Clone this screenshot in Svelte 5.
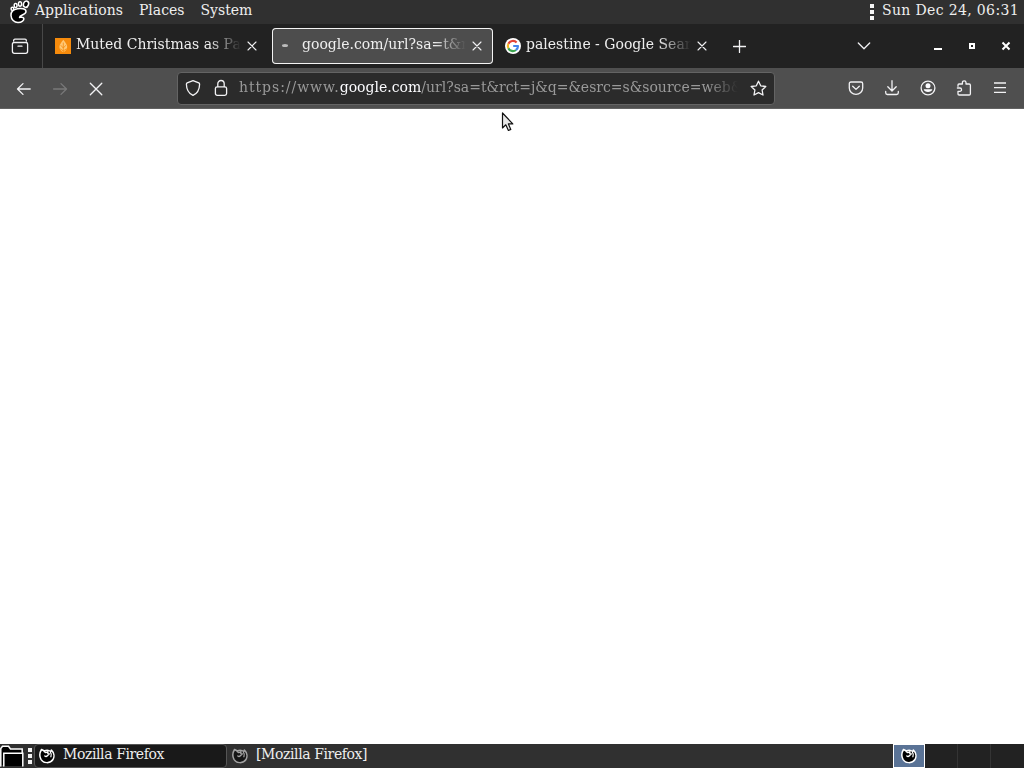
<script>
  const menus = ['Applications', 'Places', 'System'];
  const clock = 'Sun Dec 24, 06:31';

  const tabs = [
    { title: 'Muted Christmas as Pa', icon: 'orange' },
    { title: 'google.com/url?sa=t&r', icon: 'loading', active: true },
    { title: 'palestine - Google Sear', icon: 'google' }
  ];

  const windows = [
    { title: 'Mozilla Firefox', active: true },
    { title: '[Mozilla Firefox]', active: false }
  ];
</script>

{#snippet close()}
  <svg class="close" viewBox="0 0 10 10"><path d="M1 1l8 8M9 1L1 9" /></svg>
{/snippet}

{#snippet firefox(cls)}
  <svg class="fox {cls}" viewBox="0 0 16 16">
    <path class="rim" d="M2.5 1.5C.7 4.5.4 8.5 2 11.3c2.7 4.4 9.2 4.4 12 .2 1.7-3.1 1-7-1.6-9.4l-.6 1.4C9.8 2 7.4 1.8 5.4 3z" />
    <path class="face" d="M5.2 3.6l1.6 1 2.2-1-.2 2 1.6.3-2 1.9c-.8.8-1.9.8-2.6.2" />
    <path class="face" d="M11.5 4.4c1 1.4 1.1 2.9.4 4.3" />
  </svg>
{/snippet}

<div class="desktop">
  <header class="panel top">
    <svg class="foot" viewBox="0 0 22 24">
      <path d="M8.5 8.8C4.5 9.4 1.8 12 2 15.5c.2 4 3.2 7 7 7 3.8 0 6.4-2.2 5.8-4.2-.5-1.7-2.5-1.2-4.3-.9-.2-2.6 6.5-2.2 6.5-5.9 0-2.9-5-3.3-8.5-2.7z" />
      <ellipse cx="3.4" cy="8.8" rx="1.3" ry="1.6" />
      <ellipse cx="6.6" cy="5.6" rx="1.4" ry="2" />
      <ellipse cx="11" cy="4" rx="1.5" ry="2.2" />
      <ellipse cx="17" cy="4.2" rx="2.5" ry="3.2" transform="rotate(22 17 4.2)" />
    </svg>
    <nav class="menus">
      {#each menus as menu}
        <span>{menu}</span>
      {/each}
    </nav>
    <span class="handle"><i></i><i></i><i></i></span>
    <time>{clock}</time>
  </header>

  <div class="tabbar">
    <div class="view">
      <svg width="18" height="17" viewBox="0 0 18 17">
        <path d="M4 1.2h10Q15.4 1.2 15.4 3M4 1.2Q2.6 1.2 2.6 3M3 4.5h12q1.6 0 1.6 1.6v7.2q0 2-2 2H3.4q-2 0-2-2V6.1q0-1.6 1.6-1.6zM7 8.2h4" />
      </svg>
    </div>
    {#each tabs as tab}
      <div class="tab" class:active={tab.active}>
        <span class="favicon">
          {#if tab.icon === 'orange'}
            <svg width="16" height="16" viewBox="0 0 16 16">
              <rect width="16" height="16" fill="#f68b0c" />
              <path d="M8.3 1.7c2.2 3 4 5 3.9 7.3-.1 2.2-1.7 4-3.9 5.3-2.2-1.3-3.9-3.1-3.9-5.3 0-2.3 1.7-4.3 3.9-7.3z" fill="#ffc875" />
              <path d="M8.3 5v9M6 7.5L8.3 10l2.3-2.5M5.5 11l2.8 2 2.8-2" fill="none" stroke="#f68b0c" stroke-width=".8" />
            </svg>
          {:else if tab.icon === 'google'}
            <svg width="16" height="16" viewBox="0 0 16 16">
              <circle cx="8" cy="8" r="8" fill="#fff" />
              <g fill="none" stroke-width="2.2" stroke-linecap="butt">
                <path d="M3.4 5.8A5 5 0 0 1 11.6 4.5" stroke="#e44436" />
                <path d="M3.4 5.8a5 5 0 0 0 0 4.4" stroke="#f5b928" />
                <path d="M3.4 10.2a5 5 0 0 0 7.6 1.8" stroke="#3da650" />
                <path d="M11 12A5 5 0 0 0 13 8H8.2" stroke="#4384ed" />
              </g>
            </svg>
          {:else}
            <span class="throbber"></span>
          {/if}
        </span>
        <span class="title">{tab.title}</span>
        {@render close()}
      </div>
    {/each}
    <svg class="plus" viewBox="0 0 13 13"><path d="M6.5 .5v12M.5 6.5h12" /></svg>
    <svg class="chevron" viewBox="0 0 14 8"><path d="M1.3 1L7 6.7 12.7 1" /></svg>
    <div class="controls">
      <svg width="10" height="10" viewBox="0 0 10 10"><path d="M1 8h8" stroke-width="2" /></svg>
      <svg width="10" height="10" viewBox="0 0 10 10"><path d="M3 3h4v4H3z" stroke-width="2" /></svg>
      <svg width="10" height="10" viewBox="0 0 10 10"><path d="M1.5 1.5l7 7M8.5 1.5l-7 7" stroke-width="2" /></svg>
    </div>
  </div>

  <div class="navbar">
    <div class="history">
      <svg width="16" height="14" viewBox="0 0 16 14"><path d="M14.2 7H1.8M7 1.6L1.5 7 7 12.4" /></svg>
      <svg class="disabled" width="16" height="14" viewBox="0 0 16 14"><path d="M1.6 7h12.5M9 1.6L14.5 7 9 12.4" /></svg>
      <svg width="16" height="14" viewBox="0 0 16 14"><path d="M2.3 1.2l11.5 11.5M13.8 1.2L2.3 12.7" /></svg>
    </div>
    <div class="urlbar">
      <svg width="16" height="18" viewBox="0 0 16 18">
        <path d="M8 1.6l5.8 2.3c.6.3.8.6.8 1.3-.1 5.1-2.1 9.1-6.6 11.2C3.5 14.3 1.5 10.3 1.4 5.2c0-.7.2-1 .8-1.3z" />
      </svg>
      <svg class="lock" width="14" height="18" viewBox="0 0 14 18">
        <rect x="1.4" y="7.8" width="11.2" height="8.6" rx="1.8" />
        <path d="M3.8 7.5V4.7a3.2 3.2 0 0 1 6.4 0v2.8" />
      </svg>
      <span class="url"><span class="scheme">https://www.</span><b>google.com</b>/url?sa=t&amp;rct=j&amp;q=&amp;esrc=s&amp;source=web&amp;</span>
      <svg width="17" height="17" viewBox="0 0 17 17">
        <path d="M8.5 1.2l2.2 4.6 5.1.7-3.7 3.5.9 5-4.5-2.4L4 15l.9-5-3.7-3.5 5.1-.7z" />
      </svg>
    </div>
    <div class="tools">
      <svg width="16" height="16" viewBox="0 0 16 16">
        <path d="M3 2h10q1.7 0 1.7 1.7V8a6.7 6.4 0 0 1-13.4 0V3.7Q1.3 2 3 2zM4.7 6.2L8 9.4l3.3-3.2" />
      </svg>
      <svg width="16" height="16" viewBox="0 0 16 16">
        <path d="M8 .7v10M3.8 6.8L8 11l4.2-4.2M1.7 11.5v1.3q0 1.7 1.7 1.7h9.2q1.7 0 1.7-1.7v-1.3" />
      </svg>
      <svg width="16" height="16" viewBox="0 0 16 16">
        <circle cx="8" cy="8" r="6.9" />
        <path d="M3.7 9.3h8.6C11.8 13 4.2 13 3.7 9.3z" fill="#fbfbfe" stroke="none" />
        <circle cx="8" cy="5.8" r="2.5" fill="#fbfbfe" stroke="none" />
      </svg>
      <svg width="16" height="16" viewBox="0 0 16 16">
        <path d="M2 6.3V5q0-1 1-1h3.4V2.6a1.8 1.8 0 0 1 3.6 0V4h3.2q1.2 0 1.2 1.2v8.6q0 1.2-1.2 1.2H3.2Q2 15 2 13.8v-2.5h1.9a1.6 1.6 0 0 0 0-3.3H1.4" />
      </svg>
      <svg width="16" height="16" viewBox="0 0 16 16"><path d="M2 3h12M2 7.7h12M2 12.4h12" stroke-linecap="butt" /></svg>
    </div>
  </div>

  <main>
    <svg class="cursor" viewBox="0 0 13 20">
      <path d="M1.5 1v15l3.3-3.2 2.6 5.7 2.4-1.1-2.4-5.5h4.4z" fill="#e8e8e8" stroke="#111" stroke-width="1.2" />
    </svg>
  </main>

  <footer class="panel bottom">
    <svg class="folder" viewBox="0 0 24 22">
      <path d="M.8 21V3.5L2.5 1.2h6l2 2.8h11.7v4M3.8 21V8.2h19V21" />
    </svg>
    <span class="handle"><i></i><i></i><i></i></span>
    {#each windows as win}
      <div class="task" class:active={win.active}>
        {@render firefox(win.active ? '' : 'dim')}
        <span>{win.title}</span>
      </div>
    {/each}
    <div class="workspaces">
      <div class="current">{@render firefox('small')}</div>
      <div></div>
      <div></div>
      <div></div>
    </div>
  </footer>
</div>

<style>
  :global(body) {
    background: #fff;
    overflow: hidden;
  }

  .desktop {
    display: flex;
    flex-direction: column;
    width: 1024px;
    height: 768px;
    color: #eee;
    font-family: "Bookman Old Style", "URW Bookman", "DejaVu Serif", serif;
    font-size: 14px;
    line-height: 20px;
    white-space: nowrap;
  }

  svg {
    display: block;
    flex: none;
    fill: none;
    stroke: #f2f2f4;
    stroke-width: 1.3;
    stroke-linecap: round;
    stroke-linejoin: round;
  }

  .panel {
    display: flex;
    flex: none;
    height: 24px;
    box-sizing: border-box;
    background: #303030;
  }

  .top {
    padding-right: 5px;
  }

  .foot {
    width: 22px;
    height: 24px;
    margin-left: 9px;
    fill: #000;
    stroke: #fff;
    stroke-width: 1.5;
  }

  .menus {
    display: flex;
    flex: 1;
    gap: 16px;
    margin-left: 4px;
  }

  .handle {
    display: flex;
    flex-direction: column;
    gap: 2px;
    width: 4px;
    margin: 4px 8px 0 0;
  }

  .handle i {
    height: 4px;
    background: #f4f4f4;
  }

  time {
    letter-spacing: 0.36px;
  }

  .tabbar {
    display: flex;
    flex: none;
    align-items: center;
    height: 44px;
    background: #222;
  }

  .view {
    display: flex;
    align-items: center;
    width: 43px;
    height: 44px;
    padding-left: 11px;
    box-sizing: border-box;
    border-right: 1px solid #484848;
    margin-right: 4px;
  }

  .tab {
    display: flex;
    align-items: center;
    width: 221px;
    height: 36px;
    margin-right: 4px;
    padding: 0 11px 0 8px;
    box-sizing: border-box;
    border-radius: 4px;
  }

  .tab.active {
    background: #4d4d4d;
    box-shadow: inset 0 0 0 1px #f4f4f4;
  }

  .favicon {
    display: flex;
    flex: none;
    width: 16px;
    height: 16px;
    margin-right: 5px;
  }

  .favicon svg {
    stroke: none;
  }

  .throbber {
    width: 6px;
    height: 3px;
    margin: 6px 0 0 2px;
    border-radius: 50%;
    background: #bbb;
  }

  .title {
    flex: 1;
    min-width: 0;
    margin-top: -4px;
    margin-right: 6px;
    mask-image: linear-gradient(to left, transparent, #000 32px);
  }

  .active .title {
    margin-left: 1px;
  }

  .close {
    width: 10px;
    height: 10px;
    stroke-width: 1.1;
  }

  .plus {
    width: 13px;
    height: 13px;
    margin-left: 11px;
  }

  .chevron {
    width: 14px;
    height: 8px;
    margin-left: 111px;
  }

  .controls {
    display: flex;
    gap: 24px;
    margin-left: 62px;
  }

  .controls svg {
    stroke: #fff;
    stroke-linecap: butt;
    stroke-linejoin: miter;
  }

  .navbar {
    display: flex;
    flex: none;
    align-items: center;
    height: 41px;
    box-sizing: border-box;
    background: #4f4f4f;
    border-bottom: 1px solid #626262;
  }

  .history {
    display: flex;
    gap: 20px;
    width: 177px;
    padding: 1px 0 0 16px;
    box-sizing: border-box;
  }

  .disabled {
    opacity: 0.25;
  }

  .urlbar {
    display: flex;
    align-items: center;
    width: 598px;
    height: 33px;
    padding: 0 7px 0 7px;
    box-sizing: border-box;
    background: #2b2b2b;
    border: 1px solid #646464;
    border-radius: 4px;
  }

  .lock {
    margin: 0 11px 0 13px;
  }

  .url {
    flex: 1;
    min-width: 0;
    margin: -2px 12px 0 0;
    color: #999;
    mask-image: linear-gradient(to left, transparent, #000 30px);
  }

  .scheme {
    letter-spacing: 0.95px;
  }

  .url b {
    color: #fbfbfe;
    font-weight: normal;
  }

  .tools {
    display: flex;
    gap: 20px;
    margin-left: 73px;
  }

  main {
    position: relative;
    flex: 1;
    background: #fff;
  }

  .cursor {
    position: absolute;
    left: 501px;
    top: 3px;
    width: 13px;
    height: 20px;
  }

  .folder {
    width: 24px;
    height: 22px;
    margin-top: 1px;
    fill: #000;
    stroke: #fff;
    stroke-width: 1.5;
    stroke-linejoin: miter;
  }

  .bottom .handle {
    margin: 4px 2px 0 4px;
  }

  .task {
    display: flex;
    align-items: center;
    width: 193px;
    padding-left: 4px;
    box-sizing: border-box;
    border: 1px solid transparent;
    border-radius: 4px;
    letter-spacing: -0.4px;
  }

  .task.active {
    background: #191919;
    border-color: #555;
  }

  .task span {
    margin: -4px 0 0 8px;
  }

  .fox {
    width: 16px;
    height: 16px;
  }

  .rim {
    fill: #000;
    stroke: #fff;
    stroke-width: 1.5;
  }

  .face {
    stroke: #fff;
    stroke-width: 1.3;
  }

  .dim {
    opacity: 0.55;
  }

  .workspaces {
    display: flex;
    margin-left: auto;
    background: #222;
  }

  .workspaces div {
    display: flex;
    width: 33px;
    box-sizing: border-box;
    align-items: center;
    justify-content: center;
    border-right: 1px solid #343434;
  }

  .workspaces div:last-child {
    border-right: none;
  }

  .workspaces .current {
    width: 32px;
    background: #5a7396;
    border: 1px solid #fff;
  }
</style>
